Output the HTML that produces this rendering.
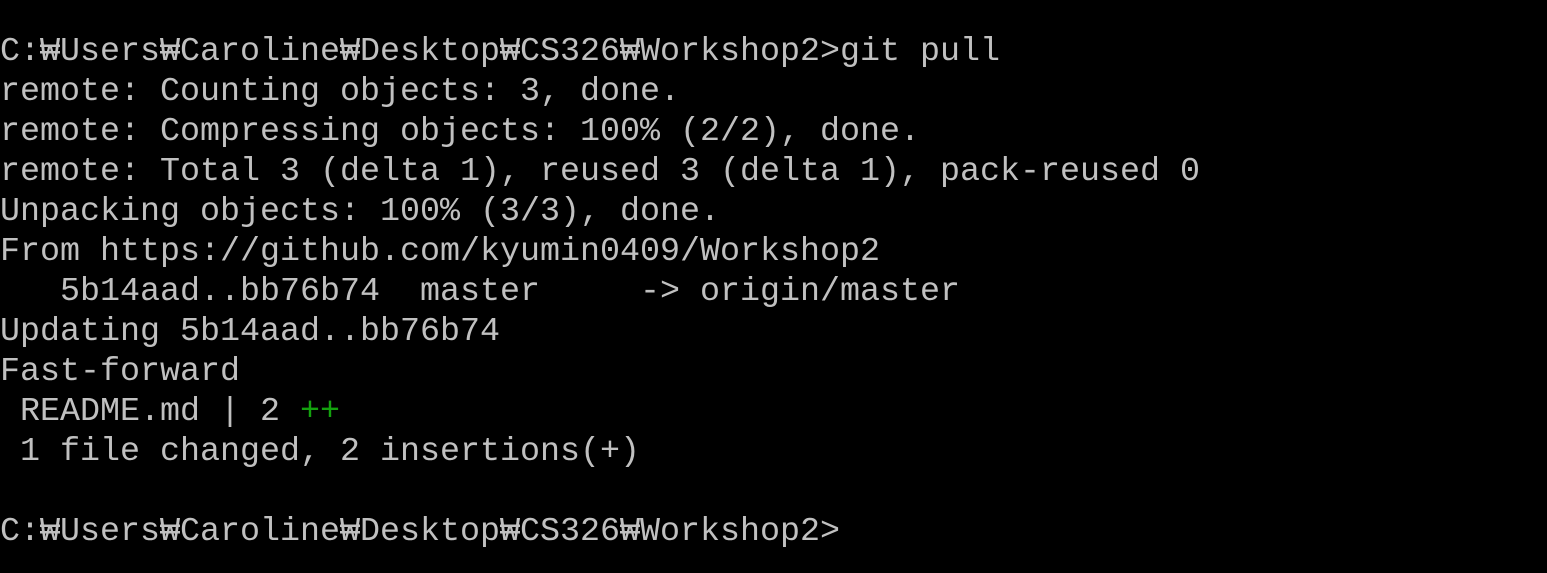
<!DOCTYPE html>
<html><head><meta charset="utf-8"><style>
html,body{margin:0;padding:0;background:#000;width:1547px;height:573px;overflow:hidden}
pre{position:absolute;left:0;top:32px;margin:0;font-family:"Liberation Mono","DejaVu Sans Mono",monospace;font-size:33.33px;line-height:40px;color:#c0c0c0;white-space:pre}
.g{color:#13a10e}
</style></head><body><pre>C:₩Users₩Caroline₩Desktop₩CS326₩Workshop2>git pull
remote: Counting objects: 3, done.
remote: Compressing objects: 100% (2/2), done.
remote: Total 3 (delta 1), reused 3 (delta 1), pack-reused 0
Unpacking objects: 100% (3/3), done.
From https://github.com/kyumin0409/Workshop2
   5b14aad..bb76b74  master     -> origin/master
Updating 5b14aad..bb76b74
Fast-forward
 README.md | 2 <span class="g">++</span>
 1 file changed, 2 insertions(+)

C:₩Users₩Caroline₩Desktop₩CS326₩Workshop2></pre></body></html>
